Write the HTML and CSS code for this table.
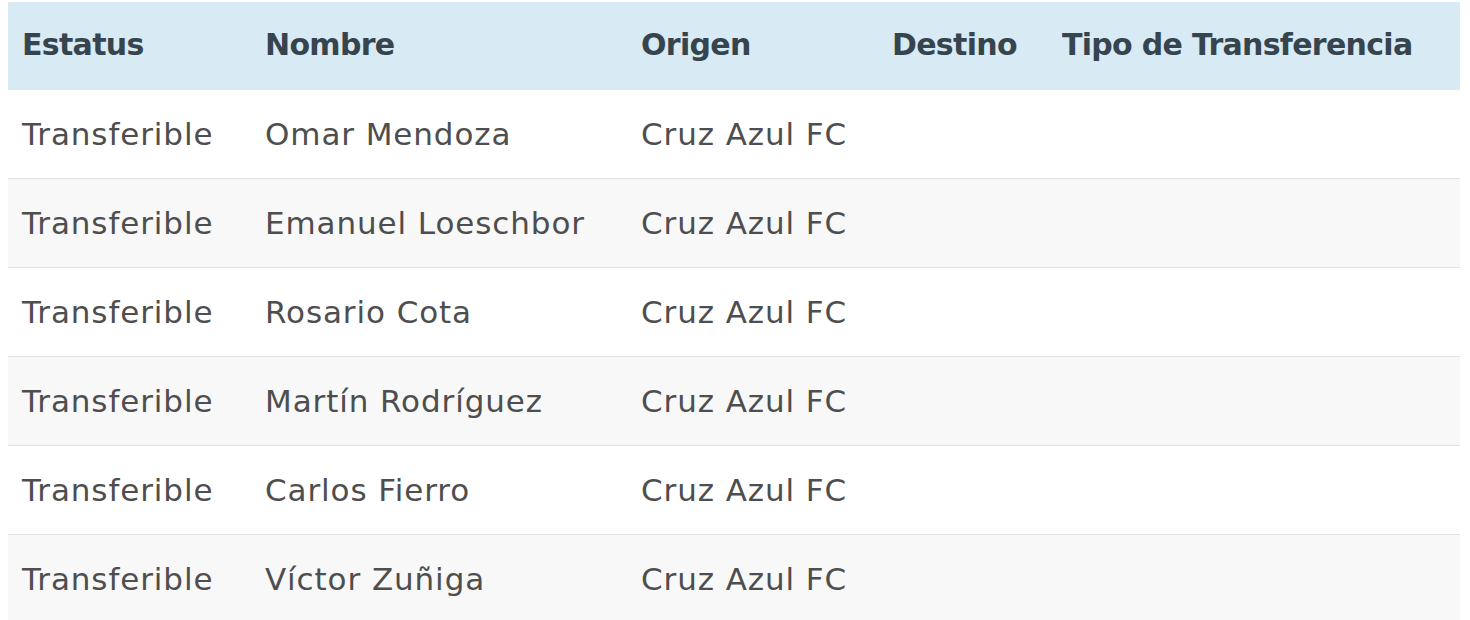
FILE: index.html
```html
<!DOCTYPE html>
<html lang="es">
<head>
<meta charset="utf-8">
<title>Transferibles</title>
<link rel="stylesheet" href="styles.css">
</head>
<body>
<table class="tabla">
  <thead>
    <tr>
      <th class="c1">Estatus</th>
      <th class="c2">Nombre</th>
      <th class="c3">Origen</th>
      <th class="c4">Destino</th>
      <th class="c5">Tipo de Transferencia</th>
    </tr>
  </thead>
  <tbody>
    <tr><td>Transferible</td><td>Omar Mendoza</td><td>Cruz Azul FC</td><td></td><td></td></tr>
    <tr><td>Transferible</td><td>Emanuel Loeschbor</td><td>Cruz Azul FC</td><td></td><td></td></tr>
    <tr><td>Transferible</td><td>Rosario Cota</td><td>Cruz Azul FC</td><td></td><td></td></tr>
    <tr><td>Transferible</td><td>Martín Rodríguez</td><td>Cruz Azul FC</td><td></td><td></td></tr>
    <tr><td>Transferible</td><td>Carlos Fierro</td><td>Cruz Azul FC</td><td></td><td></td></tr>
    <tr><td>Transferible</td><td>Víctor Zuñiga</td><td>Cruz Azul FC</td><td></td><td></td></tr>
  </tbody>
</table>
</body>
</html>
```
FILE: styles.css
```css
html, body {
  margin: 0;
  background: #ffffff;
}
body {
  padding: 2px 10px 0 8px;
  font-family: "DejaVu Sans", "Open Sans", sans-serif;
}
.tabla {
  width: 100%;
  border-collapse: collapse;
  table-layout: fixed;
}
.tabla th,
.tabla td {
  text-align: left;
  padding: 0 0 0 14px;
  white-space: nowrap;
}
.tabla th {
  height: 85px;
  padding-bottom: 3px;
  background: #d8eaf4;
  color: #36444e;
  font-size: 30px;
  font-weight: 700;
  letter-spacing: -0.7px;
}
.tabla td {
  height: 88px;
  border-top: 1px solid #e2e2e2;
  color: #4e4e4e;
  font-size: 31px;
  letter-spacing: 0.9px;
}
.tabla tbody tr:first-child td {
  border-top: none;
}
.tabla tbody tr:nth-child(even) td {
  background: #f8f8f8;
}
.c1 { width: 229px; }
.c2 { width: 362px; }
.c3 { width: 237px; }
.c4 { width: 156px; }
```
